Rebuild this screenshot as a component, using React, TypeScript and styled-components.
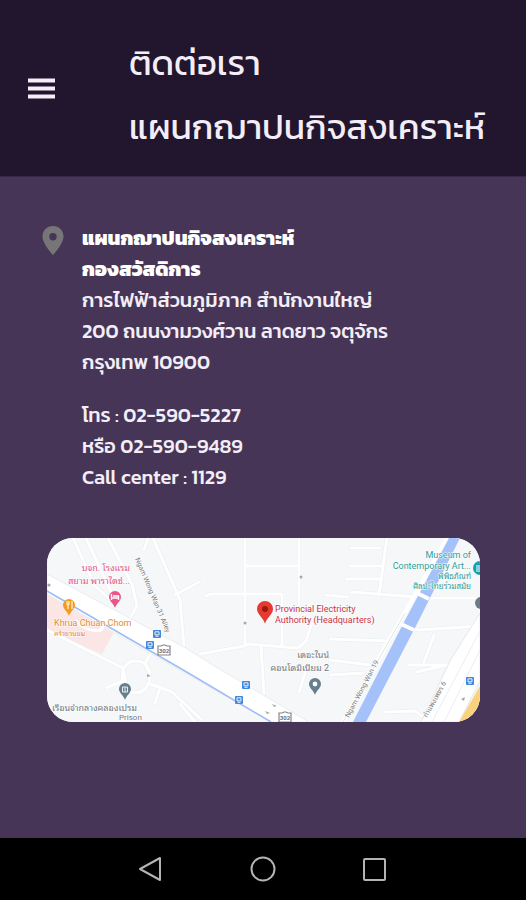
import React from "react";
import styled, { createGlobalStyle } from "styled-components";

const GlobalStyle = createGlobalStyle`
  * { box-sizing: border-box; }
  body { margin: 0; background: #463556; }
`;

const fontStack = `"Kanit", "Prompt", "Noto Sans Thai", "Open Sans", "Noto Sans", sans-serif`;
const mapFontStack = `Roboto, "Noto Sans Thai Looped", "Loma", "Garuda", "Noto Sans Thai", sans-serif`;

const Screen = styled.div`
  display: flex;
  flex-direction: column;
  min-height: 100vh;
  background: #463556;
  color: #f3edf7;
  font-family: ${fontStack};
`;

const Header = styled.header`
  display: flex;
  align-items: center;
  gap: 72px;
  padding: 17px 26px;
  border-bottom: 1px solid #392848;
  background: #22152e;
`;

const IconButton = styled.button`
  display: flex;
  align-items: center;
  justify-content: center;
  padding: 0;
  border: 0;
  background: transparent;
  color: inherit;
  cursor: pointer;
`;

const Title = styled.h1`
  margin: 0;
  padding-top: 14px;
  font-size: 35px;
  font-weight: 400;
  line-height: 64px;
  white-space: nowrap;
`;

const Content = styled.main`
  flex: 1;
  padding: 46px 46px 24px 40px;
`;

const Contact = styled.section`
  display: flex;
  align-items: flex-start;
  gap: 16px;
`;

const PinIcon = styled.svg`
  flex: none;
  width: 26px;
  height: 36px;
`;

const Details = styled.address`
  font-size: 20px;
  font-style: normal;
  font-weight: 500;
  line-height: 31px;
  white-space: nowrap;
`;

const Paragraph = styled.p<{ $spaced?: boolean }>`
  margin: ${({ $spaced }) => ($spaced ? "22px 0 0" : "0")};
`;

const Strong = styled.strong`
  font-weight: 800;
  color: #ffffff;
`;

const Phone = styled.a`
  color: inherit;
  text-decoration: none;
`;

const MapCard = styled.figure`
  margin: 45px 0 0 7px;
  overflow: hidden;
  border-radius: 26px;
  background: #f5f7f9;

  svg {
    display: block;
    width: 100%;
    height: auto;
  }
`;

const NavBar = styled.nav`
  display: flex;
  align-items: center;
  justify-content: center;
  gap: 80px;
  height: 62px;
  background: #000000;
  color: #b4b4b4;
`;

const Line = ({ children }: { children: React.ReactNode }) => (
  <>
    {children}
    <br />
  </>
);

const Marker = ({ x, y, r, fill }: { x: number; y: number; r: number; fill: string }) => (
  <path
    transform={`translate(${x} ${y}) scale(${r / 6})`}
    fill={fill}
    d="M0 11C-1 7-6 4-6 0a6 6 0 1 1 12 0C6 4 1 7 0 11Z"
  />
);

const Stop = ({ x, y }: { x: number; y: number }) => (
  <g transform={`translate(${x} ${y})`}>
    <rect x="-4" y="-4" width="8" height="8" rx="1" fill="#4187db" />
    <path d="M-2-2.2h4v3h-4zM-1.5 2.3h3" fill="none" stroke="#eaf3ff" strokeWidth="1" />
  </g>
);

const Shield = ({ x, y }: { x: number; y: number }) => (
  <g transform={`translate(${x} ${y})`}>
    <path d="M-6-4h3l2-1h2l2 1h3v9H-6Z" fill="#fff" stroke="#81868b" strokeWidth="1.2" />
    <text x="0" y="3" textAnchor="middle" fontSize="6" fontWeight="700" fill="#6b7075">302</text>
  </g>
);

const minorRoads = [
  "M26 0 48 48 66 64M39 0l26 56M61 0l24 46 5 22-7 12M101 0l-4 12M106 0l27 62 4 47",
  "M128 57l24-13",
  "M0 92 76 130 80 150 M76 132c5-12 22-12 26 0s-5 26-17 22-10-14-9-22M101 132l-3-7 11-18",
  "M76 143 59 150M101 145l24 9 30 28M113 150l-5 15M133 166l15 18",
  "M198 0v106M252 0v70M199 28h54M159 58l5-2h71v52M153 116l44-8 4-2 50 4 8-7 6-18M214 108l3 48M252 154l7-22",
  "M304 10h29M340 0l-8 57M303 28h31M299 41h35M304 54l66 5",
  "M279 57l22 2M283 101l60 2M283 122l40 5M283 137l34-2",
  "M357 89l15 3 61-4M387 97l-10 27M362 127h42M370 134l34-8-8 13M338 174l30-1 7 5",
  "M382 60h51",
];

const MapDrawing = () => (
  <svg viewBox="0 0 433 184" role="img" aria-label="Map of Provincial Electricity Authority" fontFamily={mapFontStack}>
    <rect width="433" height="184" fill="#f5f7f9" />
    <path d="M0 53 68 92 55 116 0 92Z" fill="#fbe5e5" />
    <g fill="none" strokeLinecap="round" strokeLinejoin="round">
      {minorRoads.map((d) => (
        <path key={d} d={d} stroke="#e9ecef" strokeWidth="4" />
      ))}
      {minorRoads.map((d) => (
        <path key={d} d={d} stroke="#ffffff" strokeWidth="3" />
      ))}
    </g>
    <path d="M0 36 137 109 174 132 262 184H224L143 138 0 56Z" fill="#ffffff" stroke="#e9ecef" />
    <path d="M0 53 143 136 224 184" fill="none" stroke="#9dbdf3" strokeWidth="1.6" />
    <path d="M28 82q12 13 26 10l3-6" fill="none" stroke="#fff" strokeWidth="3" />

    <path d="M296 184 400 0" fill="none" stroke="#ffffff" strokeWidth="4" />
    <path d="M402 0h11L371 84 319 184H306L356 86Z" fill="#a5c1f9" />
    <path d="M368 54l14 7M354 86l13 6" stroke="#fff" strokeWidth="4" />
    <path d="M296 184 358 75" fill="none" stroke="#e1e5e9" />
    <path d="M433 75 403 123 374 184H412L433 143Z" fill="#ffffff" stroke="#e5e8eb" />
    <path d="M433 93 385 184M433 112l-36 72" fill="none" stroke="#eaedf0" />
    <path d="M433 148 412 184H433Z" fill="#f9d27b" />

    <Stop x={110} y={96} />
    <Stop x={103} y={107} />
    <Stop x={199} y={147} />
    <Stop x={192} y={162} />
    <Stop x={423} y={143} />
    <Shield x={117} y={112} />
    <Shield x={238} y={179} />
    <g fill="#a5aaaf">
      <circle cx="254" cy="39" r="1.5" />
      <circle cx="198" cy="85" r="1.5" />
      <path d="m100 136 4 2-4 1ZM218 173l5 2-3 1ZM225 166l5 2-3 1ZM414 161l4-2-1 4Z" />
      <circle cx="2" cy="47" r="1.6" />
    </g>

    <Marker x={68} y={59} r={6} fill="#e9558b" />
    <path d="M64.500 56v6M64.500 60h7v2M66 58h5.500v2" fill="none" stroke="#fff" strokeWidth="1.4" />
    <Marker x={22} y={67} r={6} fill="#f29b1e" />
    <path d="M20 63v3q0 1 1 1v4M22 63v3h-1M25 63v8" fill="none" stroke="#fff" strokeWidth="1.1" />
    <Marker x={78} y={151} r={6} fill="#667f8c" />
    <path d="M75.500 149h5v5h-5zM78 149v5" fill="none" stroke="#e8f0f3" strokeWidth="1" />
    <Marker x={268} y={146} r={6} fill="#667f8c" />
    <circle cx="268" cy="146" r="2.400" fill="#fff" />
    <Marker x={218} y={71} r={8} fill="#e53a30" />
    <circle cx="218" cy="71" r="3" fill="#9c1710" />
    <circle cx="433" cy="30" r="7" fill="#15a0b0" />
    <path d="M429 28h4M430 29v5M432 29v5" stroke="#fff" fill="none" />
    <circle cx="434" cy="65" r="6" fill="#6f7984" />

    <g fontSize="9" stroke="#ffffff" strokeWidth="1" paintOrder="stroke" strokeLinejoin="round">
      <g fill="#e35488" textAnchor="end">
        <text x="83" y="33">บจก. โรงแรม</text>
        <text x="83" y="46">สยาม พาราไดซ์...</text>
      </g>
      <g fill="#e38a2c">
        <text x="7" y="88">Khrua Chuan Chom</text>
        <text x="7" y="98" fontSize="7">ครัวชวนชม</text>
      </g>
      <g fill="#70777d">
        <text x="5" y="173">เรือนจำกลางคลองเปรม</text>
        <text x="72" y="182" fontSize="8">Prison</text>
        <text x="282" y="120" textAnchor="end">เดอะไนน์</text>
        <text x="282" y="133" textAnchor="end">คอนโดมิเนียม 2</text>
      </g>
      <g fill="#c9303c">
        <text x="228" y="74">Provincial Electricity</text>
        <text x="228" y="85">Authority (Headquarters)</text>
      </g>
      <g fill="#289d9b" textAnchor="end">
        <text x="424" y="20">Museum of</text>
        <text x="424" y="31">Contemporary Art...</text>
        <text x="424" y="41" fontSize="8">พิพิธภัณฑ์</text>
        <text x="424" y="51" fontSize="8">ศิลปะไทยร่วมสมัย</text>
      </g>
      <g fill="#777c82" fontSize="7">
        <text transform="translate(88 21) rotate(67)">Ngam Wong Wan 31 Alley</text>
        <text transform="translate(302 180) rotate(-62)">Ngam Wong Wan 19</text>
        <text transform="translate(380 180) rotate(-61)">กำแพงเพชร 6</text>
      </g>
    </g>
  </svg>
);

export default function App() {
  return (
    <Screen>
      <GlobalStyle />
      <Header>
        <IconButton aria-label="Menu">
          <svg width="31" height="24" viewBox="0 0 31 24">
            <path d="M2 4.500h27M2 12.500h27M2 20.500h27" stroke="#f4eef7" strokeWidth="3.800" />
          </svg>
        </IconButton>
        <Title>
          ติดต่อเรา
          <br />
          แผนกฌาปนกิจสงเคราะห์
        </Title>
      </Header>
      <Content>
        <Contact>
          <PinIcon viewBox="0 0 26 36" aria-hidden="true">
            <path
              fill="#777577"
              fillRule="evenodd"
              d="M13 3C7 3 2.500 7.500 2.500 13.500 2.500 21 13 32 13 32S23.500 21 23.500 13.500C23.500 7.500 19 3 13 3Zm0 7a3.700 3.700 0 1 1 0 7.400 3.700 3.700 0 0 1 0-7.400Z"
            />
          </PinIcon>
          <Details>
            <Paragraph>
              <Strong>
                <Line>แผนกฌาปนกิจสงเคราะห์</Line>
                <Line>กองสวัสดิการ</Line>
              </Strong>
              <Line>การไฟฟ้าส่วนภูมิภาค สำนักงานใหญ่</Line>
              <Line>200 ถนนงามวงศ์วาน ลาดยาว จตุจักร</Line>
              กรุงเทพ 10900
            </Paragraph>
            <Paragraph $spaced>
              <Line>
                โทร : <Phone href="tel:025905227">02-590-5227</Phone>
              </Line>
              <Line>
                หรือ <Phone href="tel:025909489">02-590-9489</Phone>
              </Line>
              Call center : <Phone href="tel:1129">1129</Phone>
            </Paragraph>
          </Details>
        </Contact>
        <MapCard>
          <MapDrawing />
        </MapCard>
      </Content>
      <NavBar aria-label="System">
        <IconButton aria-label="Back">
          <svg width="32" height="32" viewBox="0 0 32 32" fill="none" stroke="currentColor" strokeWidth="2" strokeLinejoin="round">
            <path d="M25 5v22L5 16Z" />
          </svg>
        </IconButton>
        <IconButton aria-label="Home">
          <svg width="32" height="32" viewBox="0 0 32 32" fill="none" stroke="currentColor" strokeWidth="2">
            <circle cx="16" cy="16" r="11.500" />
          </svg>
        </IconButton>
        <IconButton aria-label="Recent apps">
          <svg width="32" height="32" viewBox="0 0 32 32" fill="none" stroke="currentColor" strokeWidth="2" strokeLinejoin="round">
            <rect x="5" y="6" width="21" height="21" rx="1" />
          </svg>
        </IconButton>
      </NavBar>
    </Screen>
  );
}
